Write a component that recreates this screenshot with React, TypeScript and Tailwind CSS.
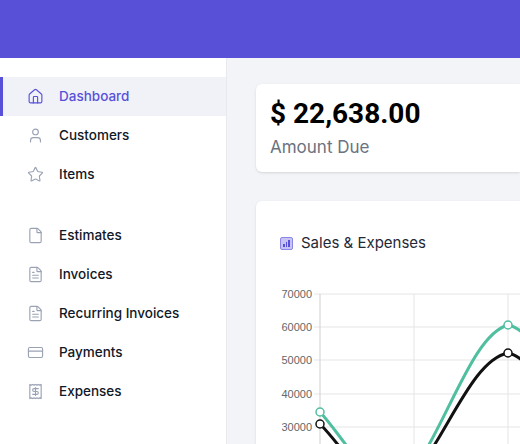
import { Home, User, Star, File, FileText, CreditCard, Receipt } from 'lucide-react';

const groups = [
  [
    { label: 'Dashboard', icon: Home, active: true },
    { label: 'Customers', icon: User },
    { label: 'Items', icon: Star },
  ],
  [
    { label: 'Estimates', icon: File },
    { label: 'Invoices', icon: FileText },
    { label: 'Recurring Invoices', icon: FileText },
    { label: 'Payments', icon: CreditCard },
    { label: 'Expenses', icon: Receipt },
  ],
];

function Chart() {
  const ys = [
    ['70000', 14],
    ['60000', 47],
    ['50000', 80],
    ['40000', 114],
    ['30000', 147],
  ] as const;
  return (
    <svg width="264" height="164" className="block">
      {ys.map(([t, y]) => (
        <g key={t}>
          <line x1="58" x2="264" y1={y} y2={y} stroke="#e5e5e5" />
          <text x="56" y={y + 4} textAnchor="end" fontSize="11" fill="#666" fontFamily="Liberation Sans, Arial, sans-serif">{t}</text>
        </g>
      ))}
      <line x1="64" x2="64" y1="14" y2="164" stroke="#cfcfcf" />
      <line x1="158" x2="158" y1="14" y2="164" stroke="#e5e5e5" />
      <line x1="252" x2="252" y1="14" y2="164" stroke="#e5e5e5" />
      <path d="M64 132 C 90 160, 120 220, 150 200 C 190 150, 215 55, 252 45 C 258 46, 262 49, 266 52" fill="none" stroke="#4fbf9f" strokeWidth="3" />
      <path d="M64 144 C 95 175, 120 230, 150 205 C 190 160, 215 80, 252 73 C 258 74, 262 77, 266 80" fill="none" stroke="#111" strokeWidth="3" />
      <circle cx="64" cy="132" r="4" fill="#fff" stroke="#4fbf9f" strokeWidth="1.5" />
      <circle cx="252" cy="45" r="4" fill="#fff" stroke="#4fbf9f" strokeWidth="1.5" />
      <circle cx="64" cy="144" r="4" fill="#fff" stroke="#111" strokeWidth="1.5" />
      <circle cx="252" cy="73" r="4" fill="#fff" stroke="#111" strokeWidth="1.5" />
    </svg>
  );
}

export default function App() {
  return (
    <div className="w-[520px] h-[444px] overflow-hidden flex flex-col bg-[#f3f4f8]" style={{ fontFamily: 'Inter, "Noto Sans", sans-serif' }}>
      <div className="h-[58px] shrink-0 bg-[#5851d8]" />
      <div className="flex flex-1 min-h-0">
        <aside className="w-[227px] shrink-0 bg-white border-r border-[#e8e9ee] pt-[19px]">
          {groups.map((g, gi) => (
            <div key={gi} className={gi > 0 ? 'mt-[22px]' : ''}>
              {g.map(({ label, icon: Icon, active }) => (
                <div
                  key={label}
                  className={`h-[39px] flex items-center gap-[15px] pl-[24px] border-l-[3px] text-[13.5px] font-medium ${
                    active ? 'bg-[#f0f2f8] border-[#5851d8] text-[#5851d8]' : 'border-transparent text-[#111827]'
                  }`}
                >
                  <Icon size={17} strokeWidth={1.6} className={active ? 'text-[#5851d8]' : 'text-[#9aa2b4]'} />
                  {label}
                </div>
              ))}
            </div>
          ))}
        </aside>
        <main className="flex-1 pl-[29px] pt-[26px] flex flex-col gap-[29px]">
          <div className="h-[88px] bg-white rounded-l-md pl-[14px] pt-[13px] shadow-sm">
            <div className="text-[28px] font-bold leading-[34px] text-black" style={{ fontFamily: 'Roboto, "Liberation Sans", sans-serif' }}>$ 22,638.00</div>
            <div className="text-[17px] text-[#6b7280] mt-[4px]">Amount Due</div>
          </div>
          <div className="flex-1 bg-white rounded-tl-md shadow-sm">
            <div className="flex items-center gap-[8px] pl-[24px] pt-[32px] h-[52px] text-[15px] text-[#1f2937]">
              <span className="w-[13px] h-[13px] rounded-[2px] bg-[#c7c4f5] border border-[#8b86e8] flex items-end justify-center gap-[1px] pb-[2px]">
                <span className="w-[1.5px] h-[3px] bg-[#5851d8]" />
                <span className="w-[1.5px] h-[5px] bg-[#5851d8]" />
                <span className="w-[1.5px] h-[7px] bg-[#5851d8]" />
              </span>
              Sales &amp; Expenses
            </div>
            <div className="mt-[27px]">
              <Chart />
            </div>
          </div>
        </main>
      </div>
    </div>
  );
}
